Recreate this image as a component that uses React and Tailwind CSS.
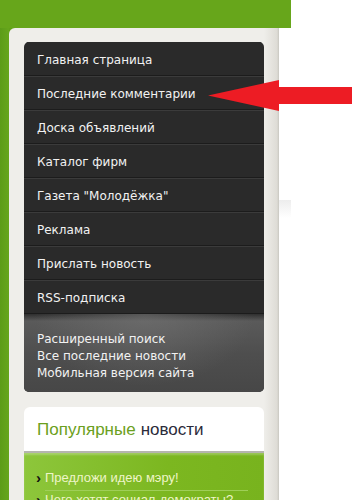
import React from 'react';

const menuItems = [
    'Главная страница',
    'Последние комментарии',
    'Доска объявлений',
    'Каталог фирм',
    'Газета "Молодёжка"',
    'Реклама',
    'Прислать новость',
    'RSS-подписка',
];

const extraLinks = ['Расширенный поиск', 'Все последние новости', 'Мобильная версия сайта'];

const popular = ['Предложи идею мэру!', 'Чего хотят социал-демократы?', 'Новые правила парковки'];

const App = () => {
    return (
        <div className="relative w-[352px] h-[500px] overflow-hidden bg-white font-['DejaVu_Sans',sans-serif]">
            <div className="w-[291px]">
                <div className="h-[28px] bg-[#67a61b]" />
                <div className="flex bg-[#62a11a]">
                    <div className="w-[9px] bg-[linear-gradient(to_right,#5c9c18,#66a61c)]" />
                    <div className="w-[270px] h-[472px] rounded-tl-[6px] pl-[15px] pr-[15px] pt-[14px] bg-[linear-gradient(to_right,#efeeea_0,#efeeea_255px,#dedcd6_268px,#c8c7c0_270px)]">
                        {/* dark menu */}
                        <div className="w-[240px] rounded-[5px] overflow-hidden bg-[#2a2a2a]">
                            {menuItems.map((item, i) => (
                                <a
                                    key={item}
                                    href="#"
                                    className={`flex items-center h-[34px] pl-[13px] pt-[1px] text-[12px] text-[#f2f2f2] border-b border-[#1c1c1c] ${i > 0 ? 'border-t border-t-[#3b3b3b]' : 'border-t border-t-[#2a2a2a]'}`}
                                >
                                    {item}
                                </a>
                            ))}
                            <div className="h-[78px] pl-[13px] pt-[17px] bg-[radial-gradient(ellipse_at_top,rgba(120,120,120,0.55),transparent_65%),linear-gradient(to_bottom,#2f2f2f_0,#5a5a5a_7px,#4e4e4e_40px,#474747_100%)]">
                                {extraLinks.map((link) => (
                                    <a key={link} href="#" className="block h-[17px] leading-[17px] text-[12px] text-[#f2f2f2]">
                                        {link}
                                    </a>
                                ))}
                            </div>
                        </div>

                        {/* popular news */}
                        <div className="mt-[15px] w-[240px] rounded-t-[6px] overflow-hidden">
                            <div className="h-[46px] bg-white pl-[13px] pt-[1px] flex items-center border-b-2 border-[#b5b5ae]">
                                <span className="font-['Liberation_Sans',sans-serif] text-[17px] text-[#6b9f20]">Популярные</span>
                                <span className="font-['Liberation_Sans',sans-serif] text-[17px] text-[#2b2b3a] ml-[5px]">новости</span>
                            </div>
                            <div className="h-[60px] pt-[16px] pl-[12px] pr-[16px] bg-[linear-gradient(to_right,#8dc63b,#7cb720_60%,#78b31e)] shadow-[inset_0_2px_2px_rgba(255,255,255,0.25)]">
                                {popular.map((p) => (
                                    <div key={p} className="flex items-start">
                                        <span className="w-[9px] text-[15px] leading-[18px] font-bold text-[#111] font-['Liberation_Sans',sans-serif]">›</span>
                                        <a href="#" className="flex-1 h-[22px] leading-[18px] text-[13px] text-[#eef5c8] font-['Liberation_Sans',sans-serif] border-b border-[#9fcf57]">
                                            {p}
                                        </a>
                                    </div>
                                ))}
                            </div>
                        </div>
                    </div>
                    <div className="flex-1 bg-white">
                        <div className="mt-[172px] h-[18px] bg-[linear-gradient(to_bottom,#ededed,#ffffff)]" />
                    </div>
                </div>
            </div>

            {/* red pointer arrow */}
            <svg className="absolute left-[208px] top-[80px]" width="144" height="31" viewBox="0 0 144 31">
                <polygon points="0,15.5 71,0 71,7 144,7 144,24 71,24 71,31" fill="#ed1c24" />
            </svg>
        </div>
    );
};

export default App;
